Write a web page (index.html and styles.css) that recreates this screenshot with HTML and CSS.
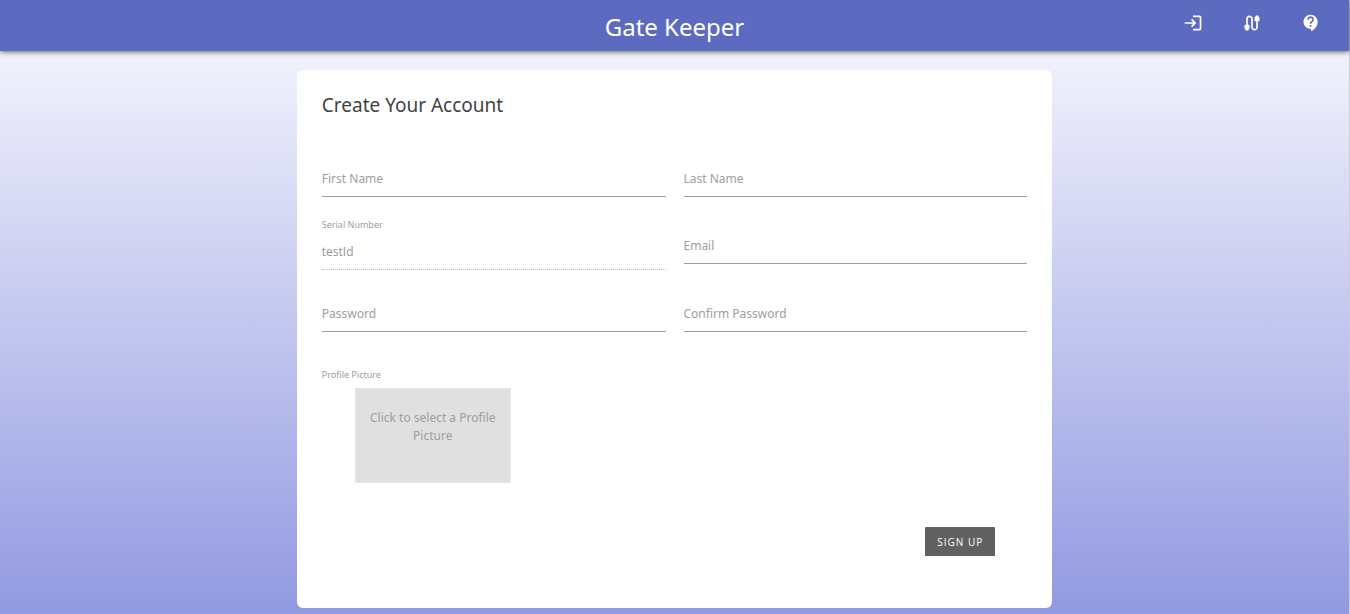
FILE: index.html
```
<!DOCTYPE html>
<html lang="en">
<head>
<meta charset="utf-8">
<meta name="viewport" content="width=device-width, initial-scale=1">
<title>Gate Keeper</title>
<link rel="stylesheet" href="styles.css">
</head>
<body>
<div class="page">
  <header class="topbar">
    <h1 class="brand">Gate Keeper</h1>
    <nav class="actions" aria-label="Main">
      <a class="action" href="#login" aria-label="Log in"><svg class="icon" viewBox="0 0 24 24"><path d="M11 7 9.6 8.4l2.6 2.6H2v2h10.2l-2.6 2.6L11 17l5-5zM20 19h-8v2h8c1.1 0 2-.9 2-2V5c0-1.100-.9-2-2-2h-8v2h8z"/></svg></a>
      <a class="action" href="#connect" aria-label="Connection"><svg class="icon" viewBox="0 0 24 24"><path d="M20 5V4c0-.55-.45-1-1-1h-2c-.55 0-1 .45-1 1v1h-1v4c0 .55.45 1 1 1h1v7c0 1.100-.9 2-2 2s-2-.9-2-2V7c0-2.210-1.790-4-4-4S5 4.790 5 7v7H4c-.55 0-1 .45-1 1v4h1v1c0 .55.45 1 1 1h2c.55 0 1-.45 1-1v-1h1v-4c0-.55-.45-1-1-1H7V7c0-1.100.9-2 2-2s2 .9 2 2v10c0 2.210 1.790 4 4 4s4-1.790 4-4v-7h1c.55 0 1-.45 1-1V5z"/></svg></a>
      <a class="action" href="#help" aria-label="Help"><svg class="icon" viewBox="0 0 24 24"><path d="M11.500 2C6.810 2 3 5.810 3 10.500S6.810 19 11.500 19h.5v3c4.860-2.340 8-7 8-11.500C20 5.810 16.190 2 11.500 2zm1 14.500h-2v-2h2v2zm0-3.500h-2c0-3.250 3-3 3-5 0-1.100-.9-2-2-2s-2 .9-2 2h-2c0-2.210 1.790-4 4-4s4 1.790 4 4c0 2.500-3 2.750-3 5z"/></svg></a>
    </nav>
  </header>
  <main class="content">
    <form class="card">
      <h2 class="title">Create Your Account</h2>
      <div class="fields">
        <div class="field"><input class="input" id="first" type="text" placeholder=" "><label class="label" for="first">First Name</label></div>
        <div class="field"><input class="input" id="last" type="text" placeholder=" "><label class="label" for="last">Last Name</label></div>
        <div class="field-static"><label class="caption" for="serial">Serial Number</label><input class="input" id="serial" type="text" value="testId" disabled></div>
        <div class="field"><input class="input" id="email" type="email" placeholder=" "><label class="label" for="email">Email</label></div>
        <div class="field"><input class="input" id="password" type="password" placeholder=" "><label class="label" for="password">Password</label></div>
        <div class="field"><input class="input" id="confirm" type="password" placeholder=" "><label class="label" for="confirm">Confirm Password</label></div>
      </div>
      <div class="picture">
        <span class="caption" id="picture-label">Profile Picture</span>
        <button class="picker" type="button" aria-describedby="picture-label">Click to select a Profile Picture</button>
      </div>
      <div class="footer"><button class="submit" type="submit">SIGN UP</button></div>
    </form>
  </main>
</div>
</body>
</html>
```
FILE: styles.css
```
* { box-sizing: border-box; }
body {
  margin: 0;
  font-family: "Noto Sans", sans-serif;
  font-size: 12px;
  line-height: 18px;
  color: #424242;
  background: #ccc;
}
.page {
  min-height: 100vh;
  margin-right: 1px;
  background: linear-gradient(#fafaff, #9299e1);
}
.topbar {
  display: grid;
  grid-template-columns: 1fr auto 1fr;
  height: 51px;
  background: #5c6bc0;
  color: #fff;
  box-shadow: 0 1px 5px rgba(0, 0, 0, 0.6);
}
.brand {
  grid-column: 2;
  margin: 0;
  font-size: 24px;
  font-weight: 400;
  line-height: 54px;
}
.actions {
  display: flex;
  justify-content: flex-end;
  gap: 39px;
  padding: 13px 28px 0 0;
}
.action { height: 20px; color: inherit; }
.icon { display: block; width: 20px; height: 20px; fill: currentColor; }
.content { padding: 19px 0 6px; }
.card {
  width: 56%;
  margin: 0 auto;
  padding: 22px 25px 52px;
  border-radius: 6px;
  background: #fff;
}
.title {
  margin: 0 0 27px;
  font-size: 19px;
  font-weight: 400;
  line-height: 26px;
}
.fields {
  display: grid;
  grid-template-columns: 1fr 1fr;
  column-gap: 18px;
  align-items: start;
}
.field { display: grid; padding: 16px 0 15px; }
.field > * { grid-area: 1 / 1; }
.field-static { display: grid; gap: 1px; padding: 5px 0 10px; }
.label {
  align-self: start;
  padding-top: 9px;
  color: #9e9e9e;
  pointer-events: none;
}
.input:focus + .label,
.input:not(:placeholder-shown) + .label { visibility: hidden; }
.caption {
  font-size: 9px;
  line-height: 16px;
  color: #9e9e9e;
}
.input {
  width: 100%;
  height: 36px;
  padding: 0;
  border: 0;
  border-bottom: 1px solid #9e9e9e;
  border-radius: 0;
  outline: 0;
  background: transparent;
  color: #424242;
  font: 12px/18px "Open Sans", sans-serif;
}
.input:disabled {
  border-bottom: 1px dotted #bdbdbd;
  color: #949494;
}
.picture {
  display: flex;
  flex-direction: column;
  align-items: flex-start;
  gap: 5px;
  padding-top: 20px;
}
.picker {
  display: flex;
  justify-content: center;
  width: 156px;
  height: 95px;
  margin-left: 33px;
  padding: 20px 10px;
  border: 1px solid #e6e6e6;
  background: #e0e0e0;
  color: #9e9e9e;
  font: inherit;
  text-align: center;
}
.footer {
  display: flex;
  justify-content: flex-end;
  padding: 44px 32px 0 0;
}
.submit {
  height: 29px;
  padding: 0 12px;
  border: 0;
  border-radius: 1px;
  background: #616161;
  color: #fff;
  font: 10px/18px "Open Sans", sans-serif;
  letter-spacing: 1px;
}
```
